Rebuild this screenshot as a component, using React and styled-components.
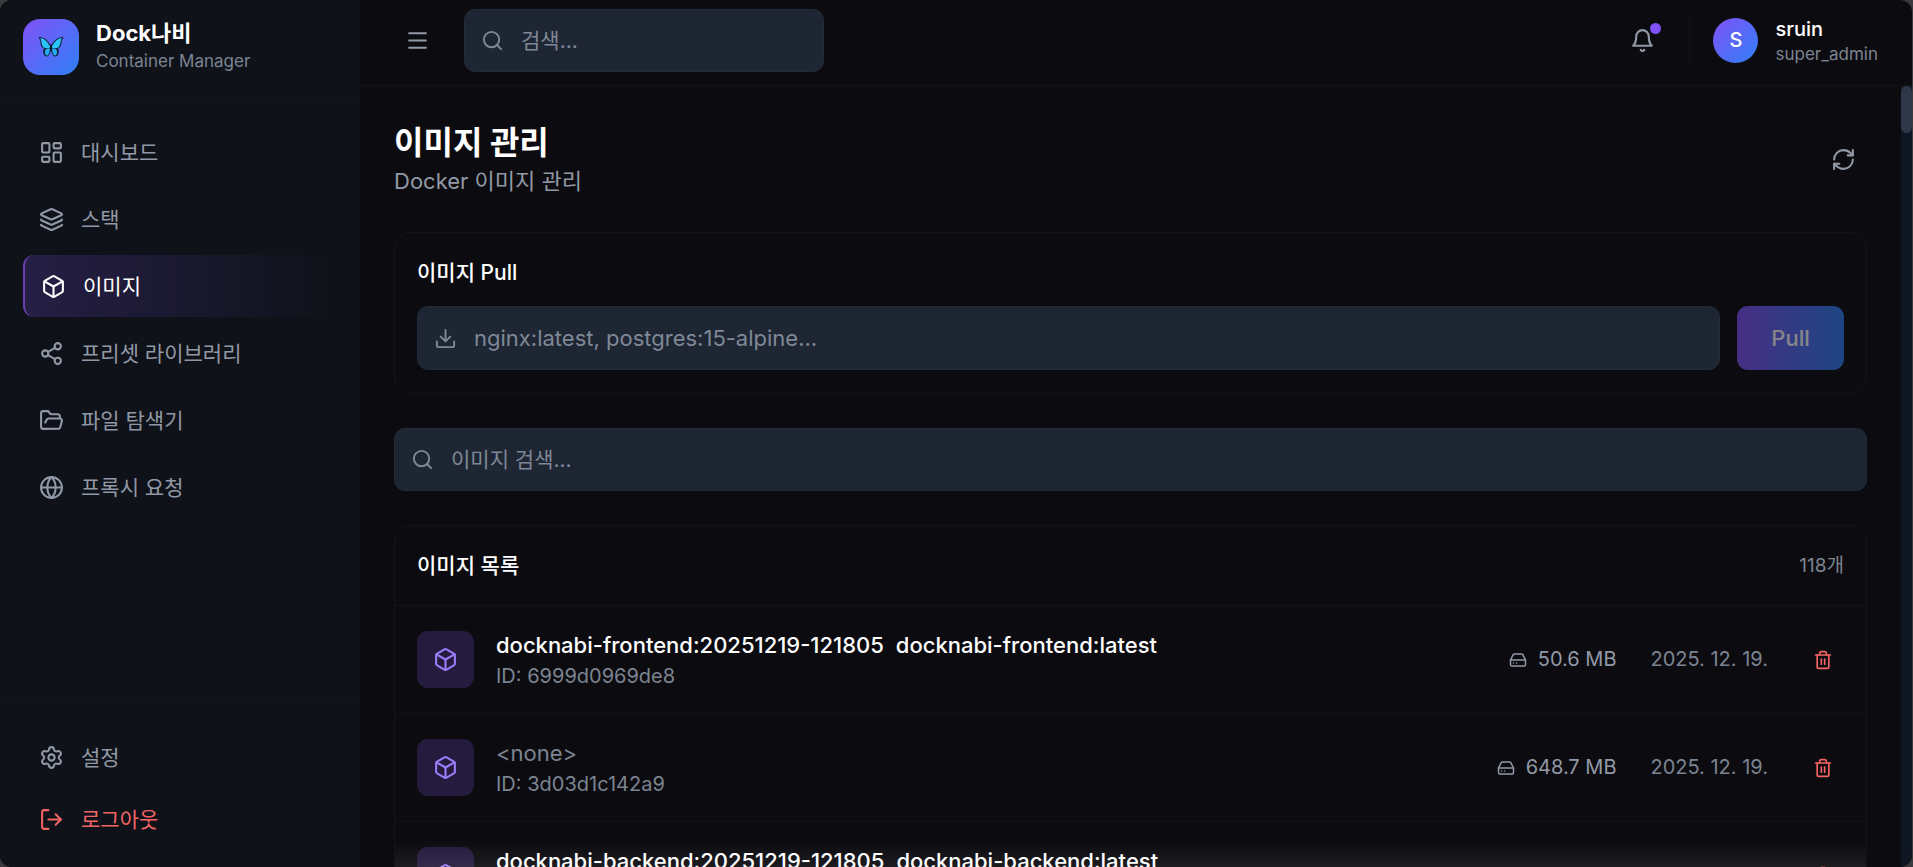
import React from "react";
import styled, { createGlobalStyle, css } from "styled-components";
import {
  LayoutDashboard,
  Layers,
  Box,
  Share2,
  FolderOpen,
  Globe,
  Settings,
  LogOut,
  Menu,
  Search,
  RefreshCw,
  HardDrive,
  Trash2,
} from "lucide-react";

const color = {
  bg: "#0c0c10",
  side: "#0f1219",
  line: "#131419",
  field: "#1e2634",
  muted: "#9299a6",
  dim: "#7c8492",
  placeholder: "#7f8896",
  danger: "#f26464",
  violet: "#8052f8",
  blue: "#3080f6",
};

const GlobalStyle = createGlobalStyle`
  *, *::before, *::after { box-sizing: border-box; }
  body {
    margin: 0;
    background: #3a3a3c;
    font-family: Inter, "Noto Sans CJK KR", sans-serif;
    font-size: 22px;
    line-height: 33px;
    color: #fff;
  }
  h1, h2, p, ul { margin: 0; padding: 0; }
  ul { list-style: none; }
  button, input { font: inherit; color: inherit; }
  svg { display: block; flex: none; }
`;

const Window = styled.div`
  display: flex;
  height: 100vh;
  margin-right: 1px;
  overflow: hidden;
  border-radius: 12px;
  background: ${color.bg};
`;

const Sidebar = styled.aside`
  display: flex;
  flex-direction: column;
  flex: none;
  width: 360px;
  background: ${color.side};
  border-right: 1px solid ${color.line};
`;

const Brand = styled.div`
  display: flex;
  align-items: center;
  gap: 17px;
  padding: 19px 23px 22px;
  border-bottom: 1px solid #13161d;
`;

const Logo = styled.div`
  display: grid;
  place-items: center;
  width: 56px;
  height: 56px;
  border-radius: 17px;
  background: linear-gradient(135deg, ${color.violet}, ${color.blue});
`;

const BrandName = styled.p`
  font-size: 22px;
  font-weight: 700;
  line-height: 28px;
`;

const Caption = styled.p`
  font-size: ${(p) => p.$size || 17}px;
  line-height: ${(p) => p.$line || 23}px;
  color: ${color.dim};
`;

const Nav = styled.nav`
  display: flex;
  flex-direction: column;
  gap: 5px;
  flex: 1;
  padding: 23px;
`;

const SideFooter = styled.div`
  display: flex;
  flex-direction: column;
  padding: 22px 23px 17px;
  border-top: 1px solid #13161d;
`;

const navItem = css`
  display: flex;
  align-items: center;
  gap: 17px;
  height: 62px;
  padding: 0 16px;
  border: 0;
  border-radius: 11px;
  background: none;
  color: ${(p) => (p.$danger ? color.danger : color.muted)};
  font-size: 21px;
  text-align: left;
  text-decoration: none;
  cursor: pointer;
  ${(p) =>
    p.$active &&
    css`
      color: #fff;
      border-left: 2px solid #6641ad;
      background: linear-gradient(90deg, rgba(128, 82, 248, 0.2), rgba(128, 82, 248, 0));
    `}
`;

const NavLink = styled.a`
  ${navItem}
`;

const NavButton = styled.button`
  ${navItem}
`;

const Main = styled.div`
  display: flex;
  flex-direction: column;
  flex: 1;
  min-width: 0;
`;

const Header = styled.header`
  display: flex;
  align-items: center;
  justify-content: space-between;
  padding: 9px 34px 13px;
  border-bottom: 1px solid ${color.line};
`;

const Cluster = styled.div`
  display: flex;
  align-items: center;
  gap: 23px;
`;

const IconButton = styled.button`
  position: relative;
  display: grid;
  place-items: center;
  width: ${(p) => p.$size || 47}px;
  height: ${(p) => p.$size || 47}px;
  padding: 0;
  border: 0;
  background: none;
  color: ${(p) => (p.$danger ? color.danger : color.muted)};
  cursor: pointer;
`;

const Dot = styled.span`
  position: absolute;
  top: 6px;
  right: 5px;
  width: 11px;
  height: 11px;
  border-radius: 50%;
  background: ${color.violet};
`;

const Field = styled.label`
  display: flex;
  align-items: center;
  gap: 17px;
  height: ${(p) => p.$height || 63}px;
  width: ${(p) => p.$width || "auto"};
  flex: ${(p) => (p.$grow ? 1 : "none")};
  padding: 0 16px;
  border: 1px solid #222b38;
  border-radius: 11px;
  background: ${color.field};
  color: ${color.placeholder};
`;

const TextInput = styled.input`
  flex: 1;
  min-width: 0;
  padding: 0;
  border: 0;
  outline: 0;
  background: none;
  color: #fff;
  font-size: ${(p) => p.$size || 21}px;
  &::placeholder {
    color: ${color.placeholder};
    opacity: 1;
  }
`;

const User = styled.div`
  display: flex;
  align-items: center;
  gap: 17px;
  padding-left: 23px;
  border-left: 1px solid ${color.line};
`;

const Avatar = styled.div`
  display: grid;
  place-items: center;
  width: 45px;
  height: 45px;
  border-radius: 50%;
  background: linear-gradient(135deg, ${color.violet}, ${color.blue});
  font-size: 20px;
  font-weight: 500;
`;

const UserName = styled.p`
  font-size: 20px;
  font-weight: 500;
  line-height: 28px;
`;

const Body = styled.div`
  display: flex;
  flex: 1;
  min-height: 0;
`;

const Content = styled.main`
  display: flex;
  flex-direction: column;
  gap: 34px;
  flex: 1;
  min-width: 0;
  padding: 34px 34px 0;
  overflow-y: auto;
  scrollbar-width: none;
  > * {
    flex: none;
  }
`;

const Track = styled.div`
  flex: none;
  width: 11px;
  background: #0f1623;
`;

const Thumb = styled.div`
  height: 47px;
  border-radius: 6px;
  background: #2d3748;
`;

const PageHead = styled.div`
  display: flex;
  align-items: center;
  justify-content: space-between;
`;

const PageTitle = styled.h1`
  font-size: 32px;
  font-weight: 700;
  line-height: 45px;
`;

const PageSubtitle = styled.p`
  color: ${color.muted};
`;

const Card = styled.section`
  border: 1px solid ${color.line};
  border-radius: 17px;
`;

const PullCard = styled(Card)`
  display: flex;
  flex-direction: column;
  gap: 17px;
  padding: 23px 22px;
`;

const CardTitle = styled.h2`
  font-size: 21px;
  font-weight: 500;
  line-height: 33px;
`;

const PullForm = styled.form`
  display: flex;
  gap: 17px;
`;

const PullButton = styled.button`
  width: 107px;
  border: 0;
  border-radius: 11px;
  background: linear-gradient(90deg, ${color.violet}, ${color.blue});
  color: #fff;
  font-weight: 500;
  opacity: 0.5;
`;

const ListHead = styled.div`
  display: flex;
  align-items: center;
  justify-content: space-between;
  height: 80px;
  padding: 0 22px;
  border-bottom: 1px solid ${color.line};
`;

const Count = styled.span`
  font-size: 19px;
  color: ${color.dim};
`;

const Row = styled.li`
  display: flex;
  align-items: center;
  gap: 34px;
  height: 108px;
  padding: 0 22px;
  border-bottom: 1px solid #111216;
`;

const Info = styled.div`
  display: flex;
  align-items: center;
  gap: 22px;
  flex: 1;
  min-width: 0;
`;

const Tile = styled.div`
  display: grid;
  place-items: center;
  width: 57px;
  height: 57px;
  border-radius: 11px;
  background: #251b3e;
  color: #9b7dfb;
`;

const Tags = styled.p`
  display: flex;
  gap: 12px;
  font-weight: ${(p) => (p.$untagged ? 400 : 500)};
  color: ${(p) => (p.$untagged ? color.dim : "#fff")};
`;

const Meta = styled.span`
  display: flex;
  align-items: center;
  gap: 11px;
  font-size: 20px;
  color: ${(p) => (p.$dim ? color.dim : color.muted)};
`;

const Fade = styled.div`
  position: sticky;
  bottom: 0;
  height: 28px;
  margin-top: -28px;
  background: linear-gradient(rgba(255, 255, 255, 0), rgba(255, 255, 255, 0.07));
  pointer-events: none;
`;

const Butterfly = () => (
  <svg width="26" height="22" viewBox="0 0 52 44" aria-hidden="true">
    <path
      d="M26 20C21 9 11 1 1 2c1 4 4 6 4 11 0 6 2 10 7 12-3 4-2 10 1 14 5 5 11 1 13-13 2 14 8 18 13 13 3-4 4-10 1-14 5-2 7-6 7-12 0-5 3-7 4-11-10-1-20 7-25 18z"
      fill="#10233c"
    />
    <path d="M25 23C20 12 13 5 5 4c3 7 1 18 9 20 4 1 7 0 11-1z" fill="#2bc4fb" />
    <path d="M27 23C32 12 39 5 47 4c-3 7-1 18-9 20-4 1-7 0-11-1z" fill="#2bc4fb" />
    <path d="M24 25c-7-1-11 3-10 9 2 9 9 6 10-9z" fill="#25aef5" />
    <path d="M28 25c7-1 11 3 10 9-2 9-9 6-10-9z" fill="#25aef5" />
    <path d="M26 18v12" stroke="#0b1422" strokeWidth="3" strokeLinecap="round" />
  </svg>
);

const BellIcon = () => (
  <svg
    width="25"
    height="25"
    viewBox="0 0 24 24"
    fill="none"
    stroke="currentColor"
    strokeWidth="2"
    strokeLinecap="round"
    strokeLinejoin="round"
    aria-hidden="true"
  >
    <path d="M6 8a6 6 0 0 1 12 0c0 7 3 9 3 9H3s3-2 3-9" />
    <path d="M10.3 21a1.94 1.94 0 0 0 3.4 0" />
  </svg>
);

const DownloadIcon = () => (
  <svg
    width="23"
    height="23"
    viewBox="0 0 24 24"
    fill="none"
    stroke="currentColor"
    strokeWidth="2"
    strokeLinecap="round"
    strokeLinejoin="round"
    aria-hidden="true"
  >
    <path d="M21 15v4a2 2 0 0 1-2 2H5a2 2 0 0 1-2-2v-4M7 10l5 5 5-5M12 15V3" />
  </svg>
);

const stroke = { strokeWidth: 2, "aria-hidden": true };

const navItems = [
  { label: "대시보드", Icon: LayoutDashboard },
  { label: "스택", Icon: Layers },
  { label: "이미지", Icon: Box, active: true },
  { label: "프리셋 라이브러리", Icon: Share2 },
  { label: "파일 탐색기", Icon: FolderOpen },
  { label: "프록시 요청", Icon: Globe },
];

const images = [
  {
    tags: ["docknabi-frontend:20251219-121805", "docknabi-frontend:latest"],
    id: "6999d0969de8",
    size: "50.6 MB",
    date: "2025. 12. 19.",
  },
  { tags: [], id: "3d03d1c142a9", size: "648.7 MB", date: "2025. 12. 19." },
  { tags: ["docknabi-backend:20251219-121805", "docknabi-backend:latest"] },
];

const ImageRow = ({ tags, id, size, date }) => (
  <Row>
    <Info>
      <Tile>
        <Box size={25} {...stroke} />
      </Tile>
      <div>
        <Tags $untagged={!tags.length}>
          {tags.length ? tags.map((t) => <span key={t}>{t}</span>) : "<none>"}
        </Tags>
        <Caption $size={20} $line={28}>
          {id ? `ID: ${id}` : "\u00a0"}
        </Caption>
      </div>
    </Info>
    {size && (
      <Meta>
        <HardDrive size={18} {...stroke} />
        {size}
      </Meta>
    )}
    {date && <Meta $dim>{date}</Meta>}
    <IconButton $size={42} $danger aria-label="삭제">
      <Trash2 size={20} {...stroke} />
    </IconButton>
  </Row>
);

export default function App() {
  return (
    <>
      <GlobalStyle />
      <Window>
        <Sidebar>
          <Brand>
            <Logo>
              <Butterfly />
            </Logo>
            <div>
              <BrandName>Dock나비</BrandName>
              <Caption $line={28}>Container Manager</Caption>
            </div>
          </Brand>
          <Nav>
            {navItems.map(({ label, Icon, active }) => (
              <NavLink href="#" key={label} $active={active}>
                <Icon size={25} {...stroke} />
                {label}
              </NavLink>
            ))}
          </Nav>
          <SideFooter>
            <NavLink href="#">
              <Settings size={25} {...stroke} />
              설정
            </NavLink>
            <NavButton type="button" $danger>
              <LogOut size={25} {...stroke} />
              로그아웃
            </NavButton>
          </SideFooter>
        </Sidebar>
        <Main>
          <Header>
            <Cluster>
              <IconButton aria-label="메뉴">
                <Menu size={25} {...stroke} />
              </IconButton>
              <Field $width="360px">
                <Search size={23} {...stroke} />
                <TextInput placeholder="검색..." aria-label="검색" />
              </Field>
            </Cluster>
            <Cluster>
              <IconButton aria-label="알림">
                <BellIcon />
                <Dot />
              </IconButton>
              <User>
                <Avatar>S</Avatar>
                <div>
                  <UserName>sruin</UserName>
                  <Caption>super_admin</Caption>
                </div>
              </User>
            </Cluster>
          </Header>
          <Body>
            <Content>
              <PageHead>
                <div>
                  <PageTitle>이미지 관리</PageTitle>
                  <PageSubtitle>Docker 이미지 관리</PageSubtitle>
                </div>
                <IconButton aria-label="새로고침">
                  <RefreshCw size={25} {...stroke} />
                </IconButton>
              </PageHead>
              <PullCard>
                <CardTitle>이미지 Pull</CardTitle>
                <PullForm>
                  <Field $grow $height={64}>
                    <DownloadIcon />
                    <TextInput
                      $size={22}
                      placeholder="nginx:latest, postgres:15-alpine..."
                      aria-label="이미지 이름"
                    />
                  </Field>
                  <PullButton type="submit" disabled>
                    Pull
                  </PullButton>
                </PullForm>
              </PullCard>
              <Field>
                <Search size={23} {...stroke} />
                <TextInput placeholder="이미지 검색..." aria-label="이미지 검색" />
              </Field>
              <Card>
                <ListHead>
                  <CardTitle>이미지 목록</CardTitle>
                  <Count>118개</Count>
                </ListHead>
                <ul>
                  {images.map((image, i) => (
                    <ImageRow key={i} {...image} />
                  ))}
                </ul>
                <Fade />
              </Card>
            </Content>
            <Track>
              <Thumb />
            </Track>
          </Body>
        </Main>
      </Window>
    </>
  );
}
